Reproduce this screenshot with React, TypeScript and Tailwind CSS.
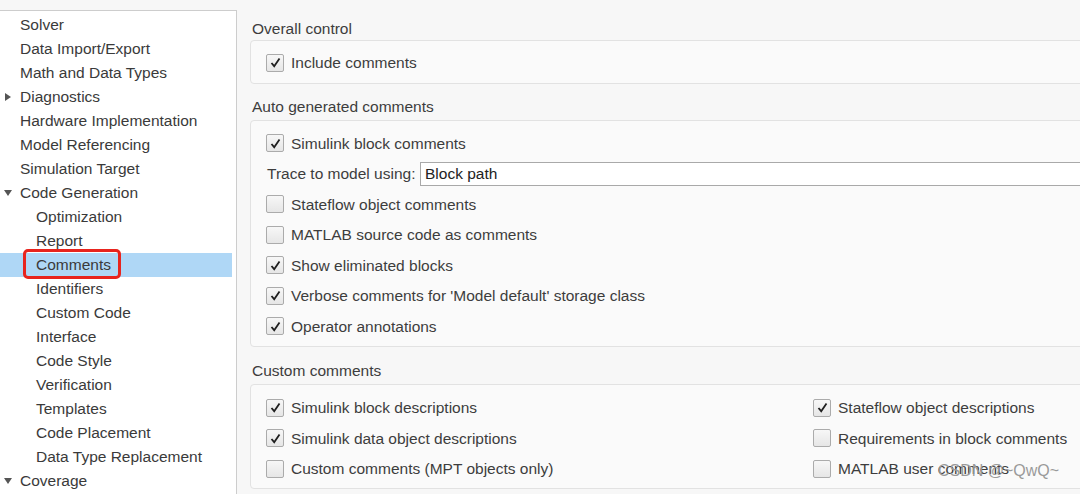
import React from 'react';

const font = { fontFamily: '"Liberation Sans", Arial, sans-serif' };

type NavItem = { label: string; level: 0 | 1; arrow?: 'right' | 'down'; selected?: boolean };

const nav: NavItem[] = [
  { label: 'Solver', level: 0 },
  { label: 'Data Import/Export', level: 0 },
  { label: 'Math and Data Types', level: 0 },
  { label: 'Diagnostics', level: 0, arrow: 'right' },
  { label: 'Hardware Implementation', level: 0 },
  { label: 'Model Referencing', level: 0 },
  { label: 'Simulation Target', level: 0 },
  { label: 'Code Generation', level: 0, arrow: 'down' },
  { label: 'Optimization', level: 1 },
  { label: 'Report', level: 1 },
  { label: 'Comments', level: 1, selected: true },
  { label: 'Identifiers', level: 1 },
  { label: 'Custom Code', level: 1 },
  { label: 'Interface', level: 1 },
  { label: 'Code Style', level: 1 },
  { label: 'Verification', level: 1 },
  { label: 'Templates', level: 1 },
  { label: 'Code Placement', level: 1 },
  { label: 'Data Type Replacement', level: 1 },
  { label: 'Coverage', level: 0, arrow: 'down' },
];

function Arrow({ dir }: { dir: 'right' | 'down' }) {
  return (
    <svg width="8" height="8" viewBox="0 0 8 8" className="absolute left-[4px] top-[8px]">
      {dir === 'right' ? <path d="M1 0 L7 4 L1 8 Z" fill="#555" /> : <path d="M0 1 L8 1 L4 7 Z" fill="#555" />}
    </svg>
  );
}

function Checkbox({ checked }: { checked: boolean }) {
  return (
    <span className="w-[18px] h-[18px] shrink-0 border border-[#ababab] rounded-[2px] bg-gradient-to-b from-[#f7f7f7] to-[#e6e6e6] flex items-center justify-center">
      {checked && (
        <svg width="13" height="13" viewBox="0 0 13 13">
          <path d="M2.5 7 L5.2 10.2 L10.5 2.5" fill="none" stroke="#1f1f1f" strokeWidth="1.8" />
        </svg>
      )}
    </span>
  );
}

function Check({ checked, label }: { checked: boolean; label: string }) {
  return (
    <div className="h-[30.5px] flex items-center gap-[7px] whitespace-nowrap">
      <Checkbox checked={checked} />
      <span>{label}</span>
    </div>
  );
}

export default function App() {
  return (
    <div style={font} className="relative w-[1080px] h-[494px] overflow-hidden flex bg-[#f7f7f7] text-[15.5px] text-[#3a3a3a]">
      {/* tree */}
      <div className="w-[237px] shrink-0 mt-[10px] bg-white border-t border-r border-[#cdcdcd] pt-[2px] pr-[4px]">
        {nav.map((n) => (
          <div
            key={n.label}
            className={`relative h-[24px] leading-[24px] whitespace-nowrap ${n.selected ? 'bg-[#afd7f6]' : ''} ${n.level === 1 ? 'pl-[36px]' : 'pl-[20px]'}`}
          >
            {n.arrow && <Arrow dir={n.arrow} />}
            {n.label}
            {n.selected && (
              <span className="absolute left-[23px] top-[-4px] w-[98px] h-[30px] border-[3px] border-[#e8241e] rounded-[5px]" />
            )}
          </div>
        ))}
      </div>

      {/* settings */}
      <div className="flex-1 pt-[17px] pl-[13px] overflow-hidden text-[#3d3d3d]">
        <div className="h-[23px] flex items-center pl-[2px]">Overall control</div>
        <div className="mr-[-12px] h-[44px] border border-[#e2e2e2] rounded-[4px] bg-[#fafafa] pl-[15px] pt-[1px] flex items-center">
          <div className="flex items-center gap-[7px]">
            <Checkbox checked />
            <span>Include comments</span>
          </div>
        </div>

        <div className="h-[36px] pt-[11px] pl-[2px] leading-[24px]">Auto generated comments</div>
        <div className="mr-[-12px] border border-[#e2e2e2] rounded-[4px] bg-[#fafafa] pl-[15px] pt-[7px] pb-[4px]">
          <Check checked label="Simulink block comments" />
          <div className="h-[30.5px] flex items-center whitespace-nowrap">
            <span className="pl-[1px] w-[154px]">Trace to model using:</span>
            <div className="flex-1 h-[24px] bg-white border border-[#a9a9a9] border-r-0 pl-[4px] leading-[22px] text-[#222]">
              Block path
            </div>
          </div>
          <Check checked={false} label="Stateflow object comments" />
          <Check checked={false} label="MATLAB source code as comments" />
          <Check checked label="Show eliminated blocks" />
          <Check checked label="Verbose comments for 'Model default' storage class" />
          <Check checked label="Operator annotations" />
        </div>

        <div className="h-[37px] pt-[12px] pl-[2px] leading-[24px]">Custom comments</div>
        <div className="mr-[-12px] border border-[#e2e2e2] rounded-[4px] bg-[#fafafa] pl-[15px] pt-[8px] pb-[4px] flex">
          <div className="w-[547px]">
            <Check checked label="Simulink block descriptions" />
            <Check checked label="Simulink data object descriptions" />
            <Check checked={false} label="Custom comments (MPT objects only)" />
          </div>
          <div>
            <Check checked label="Stateflow object descriptions" />
            <Check checked={false} label="Requirements in block comments" />
            <Check checked={false} label="MATLAB user comments" />
          </div>
        </div>
      </div>

      <span className="absolute left-[938px] top-[459px] text-[16px] text-[#9a9a9a] whitespace-nowrap pointer-events-none">
        CSDN @~QwQ~
      </span>
    </div>
  );
}
